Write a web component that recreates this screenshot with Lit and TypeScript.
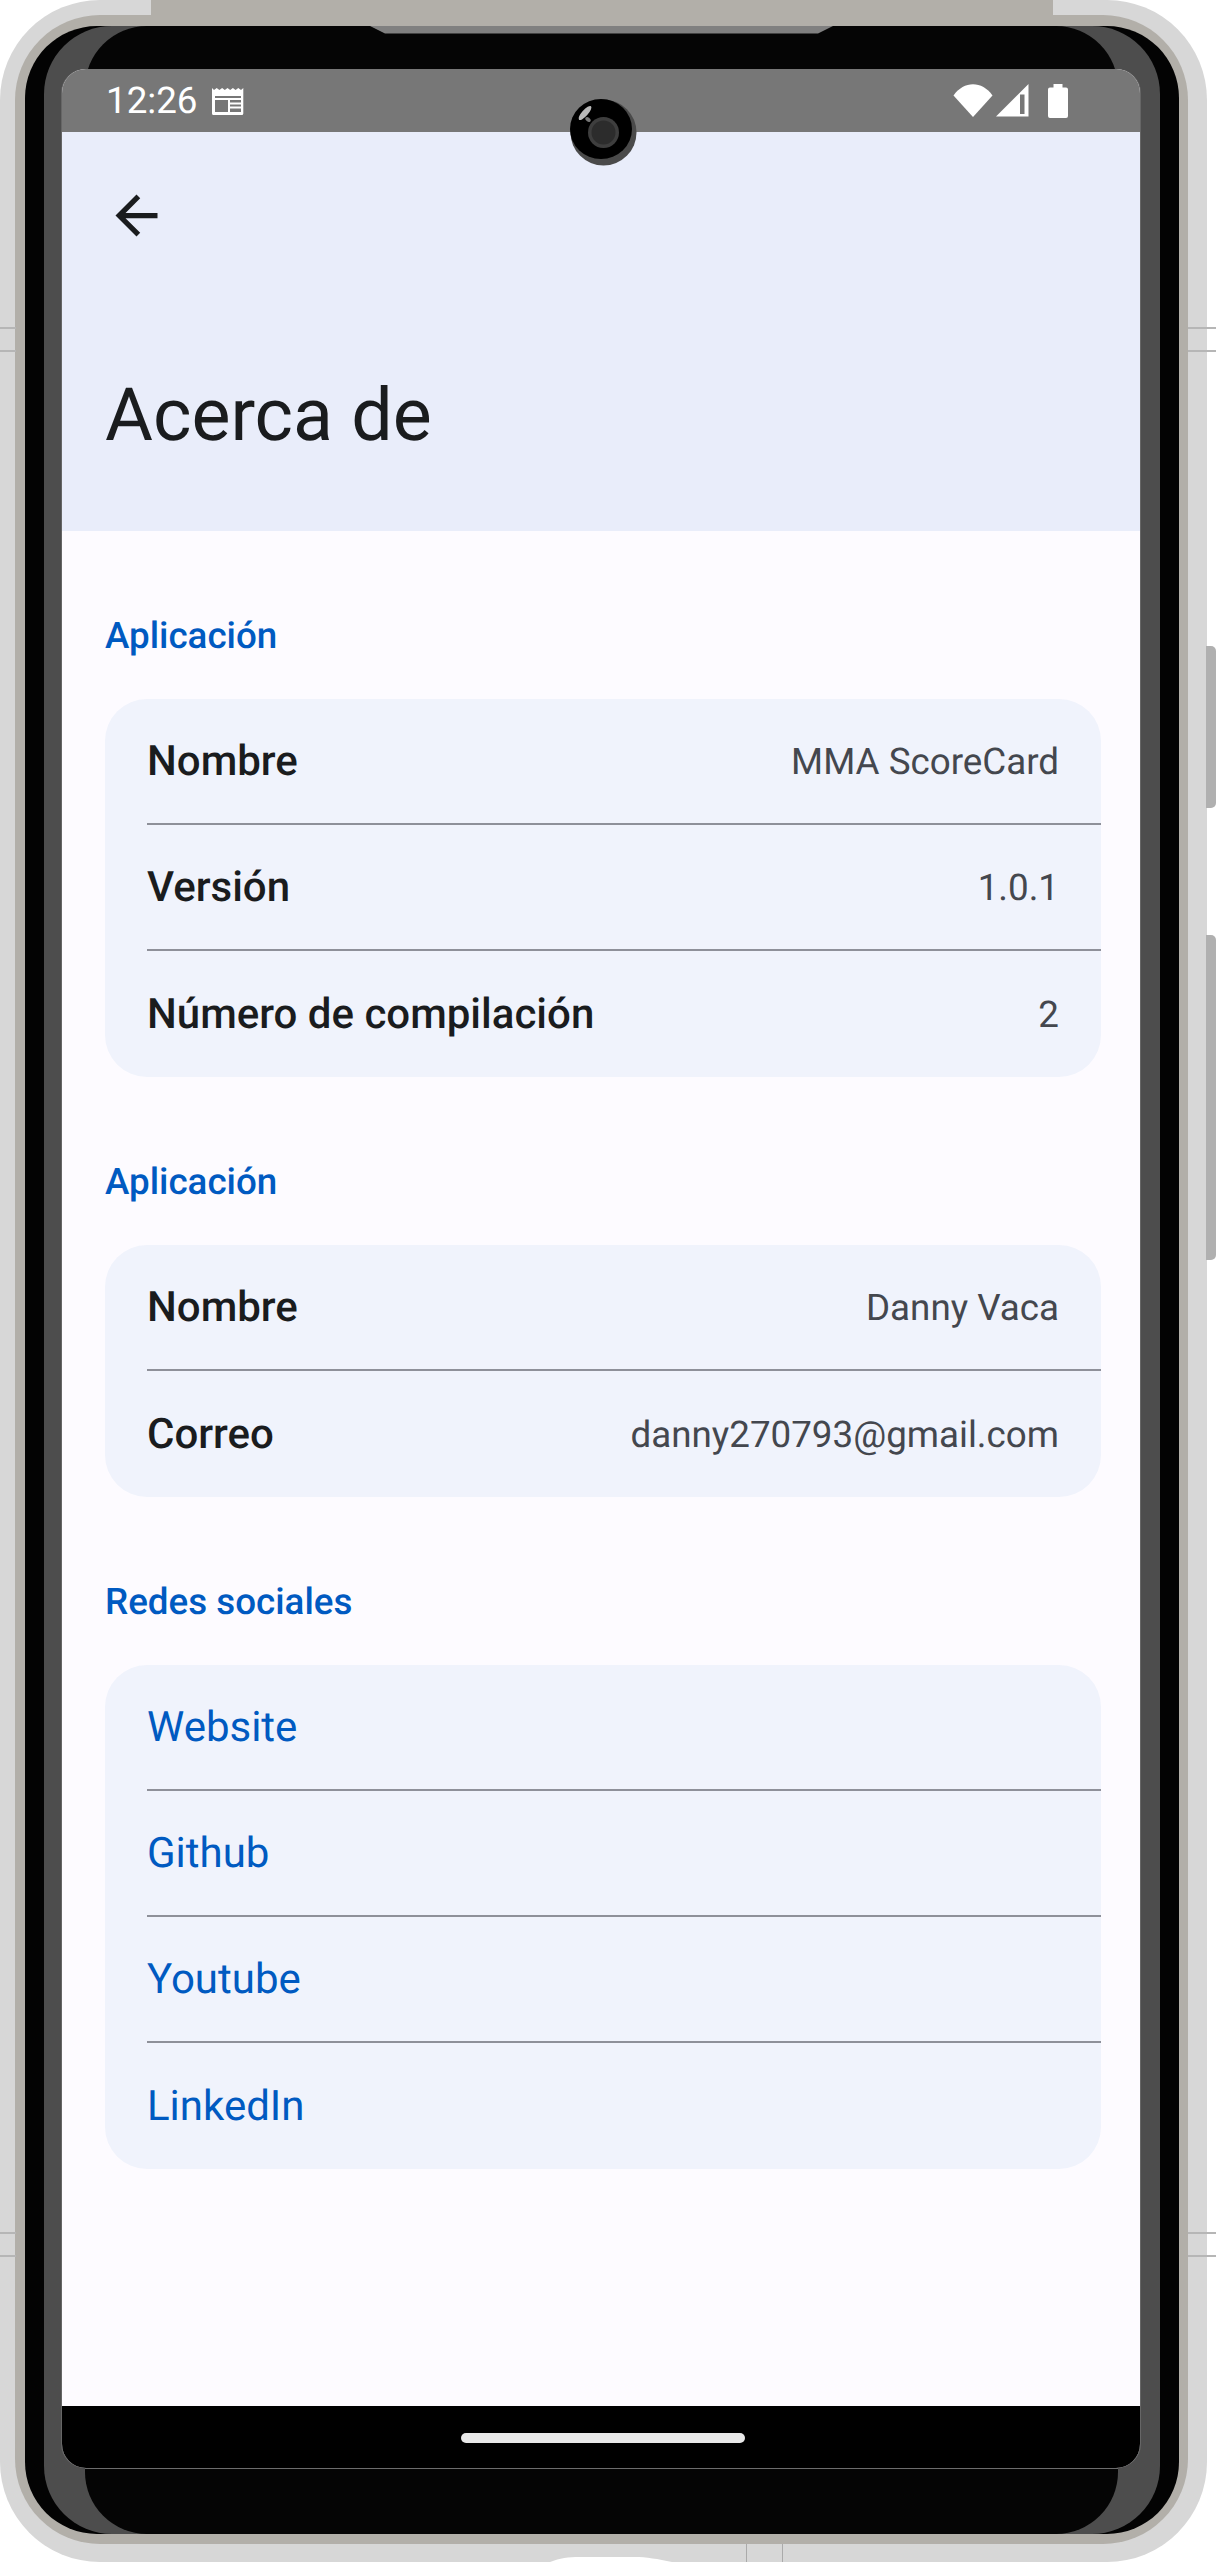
import { LitElement, html, css, svg } from "lit";
import { customElement } from "lit/decorators.js";

type Row = { label: string; value?: string };
type Section = { title: string; link?: boolean; rows: Row[] };

const sections: Section[] = [
  {
    title: "Aplicación",
    rows: [
      { label: "Nombre", value: "MMA ScoreCard" },
      { label: "Versión", value: "1.0.1" },
      { label: "Número de compilación", value: "2" },
    ],
  },
  {
    title: "Aplicación",
    rows: [
      { label: "Nombre", value: "Danny Vaca" },
      { label: "Correo", value: "danny270793@gmail.com" },
    ],
  },
  {
    title: "Redes sociales",
    link: true,
    rows: [{ label: "Website" }, { label: "Github" }, { label: "Youtube" }, { label: "LinkedIn" }],
  },
];

const calendarIcon = svg`
  <path fill="#fff" fill-rule="evenodd" d="M0 1l2 2 2.7-2 2.7 2 2.7-2 2.7 2 2.7-2 2.7 2 2.7-2 2.7 2 2.7-2 2.7 2 2.3-2V26.500a1.500 1.500 0 0 1-1.500 1.500H1.500A1.500 1.500 0 0 1 0 26.500zM3 9v16h13V13H3V9zM3 9v2h26V9zM18 13v2.400h11V13zM18 17.400v2.200h11v-2.200zM18 21.600V25h11v-3.400z"/>
`;

@customElement("app-root")
export class AppRoot extends LitElement {
  static styles = css`
    :host {
      display: block;
      position: relative;
      width: 1216px;
      height: 2562px;
      overflow: hidden;
      background: #fff;
      font-family: Roboto, "Noto Sans", sans-serif;
      text-rendering: geometricPrecision;
    }
    .shell {
      box-sizing: border-box;
      width: 1207px;
      height: 2562px;
      padding: 15px 19px 0 15px;
      background: #d7d7d7;
      border-radius: 100px;
    }
    .ring {
      box-sizing: border-box;
      height: 2529px;
      padding: 11px 9px 10px 10px;
      background: #b2afa9;
      border-radius: 85px;
    }
    .black {
      height: 100%;
      padding: 0 19px;
      background: #030303;
      border-radius: 72px;
    }
    .dark {
      height: 100%;
      padding: 0 42px 0 41px;
      background: #4d4d4d;
      border-radius: 68px;
    }
    .bezel {
      box-sizing: border-box;
      display: flex;
      flex-direction: column;
      height: 100%;
      padding-top: 43px;
      background: #050505;
      border-radius: 62px;
    }
    .screen {
      display: flex;
      flex-direction: column;
      height: 2399px;
      margin: 0 -22px 0 -23px;
      overflow: hidden;
      background: #fdfbff;
      border-radius: 24px;
      box-shadow: -1px 0 #666, 1px 0 #666;
    }
    .chin-line {
      height: 1px;
      background: #6b6b6b;
    }

    /* status bar */
    .status {
      flex: none;
      display: flex;
      align-items: center;
      height: 63px;
      padding: 0 72px 0 44px;
      color: #fff;
      background: #777;
    }
    .time {
      font-size: 36.75px;
      line-height: 36px;
    }
    .cal {
      margin-left: 14px;
    }
    .status-right {
      display: flex;
      align-items: flex-start;
      margin-left: auto;
    }
    .wifi { margin-right: 3px; }
    .signal { margin-right: 19px; }

    /* app bar */
    .appbar {
      flex: none;
      box-sizing: border-box;
      height: 399px;
      padding: 52px 43px 0;
      background: #e9edfa;
    }
    .back {
      display: block;
    }
    h1 {
      margin: 123px 0 0;
      font-size: 73.5px;
      font-weight: 400;
      line-height: 90px;
      color: #1a1c1e;
    }

    /* content */
    .content {
      flex: 1;
      padding: 0 39px 0 43px;
    }
    .section-title {
      height: 168px;
      box-sizing: border-box;
      padding-top: 79px;
      font-size: 36.75px;
      font-weight: 500;
      line-height: 52px;
      color: #005ac1;
    }
    .card {
      overflow: hidden;
      background: #f0f3fc;
      border-radius: 42px;
    }
    .row {
      box-sizing: border-box;
      display: flex;
      align-items: center;
      justify-content: space-between;
      height: 126px;
      margin-left: 42px;
      padding-right: 42px;
    }
    .row:not(:last-child) {
      border-bottom: 2px solid #8e9099;
    }
    .label {
      font-size: 42px;
      font-weight: 500;
      color: #1a1c1e;
    }
    .value {
      font-size: 36.75px;
      color: #44474e;
    }
    .link {
      font-size: 42px;
      color: #005ac1;
    }

    /* navigation bar */
    .nav {
      flex: none;
      display: flex;
      align-items: flex-start;
      justify-content: center;
      height: 62px;
      margin-top: auto;
      background: #000;
    }
    .pill {
      width: 284px;
      height: 10px;
      margin: 27px 0 0 3px;
      background: #e9e9e9;
      border-radius: 5px;
    }

    /* things that sit over the frame */
    .top-strip {
      position: absolute;
      left: 151px;
      top: 0;
      width: 902px;
      height: 26px;
      background: #b2afa9;
    }
    .notch {
      position: absolute;
      left: 370px;
      top: 26px;
    }
    .camera {
      position: absolute;
      left: 570px;
      top: 99px;
    }
    .side-btn {
      position: absolute;
      left: 1206px;
      width: 10px;
      background: #b0b0b0;
      border-radius: 0 5px 5px 0;
    }
    .btn-a { top: 646px; height: 162px; }
    .btn-b { top: 935px; height: 325px; }
    .hair {
      position: absolute;
      height: 2px;
      background: #b6b6b6;
    }
    .hair-v {
      position: absolute;
      top: 2544px;
      width: 1px;
      height: 18px;
      background: #aaa;
    }
    .foot {
      position: absolute;
      left: 550px;
      top: 2556px;
    }
  `;

  renderRow(row: Row, link?: boolean) {
    return html`<div class="row">
      ${link
        ? html`<span class="link">${row.label}</span>`
        : html`<span class="label">${row.label}</span><span class="value">${row.value}</span>`}
    </div>`;
  }

  render() {
    return html`
      <div class="shell">
        <div class="ring">
          <div class="black">
            <div class="dark">
              <div class="bezel">
                <div class="screen">
                  <div class="status">
                    <span class="time">12:26</span>
                    <svg class="cal" width="32" height="28" viewBox="0 0 32 28">${calendarIcon}</svg>
                    <div class="status-right">
                      <svg class="wifi" width="40" height="33" viewBox="0 0 40 33">
                        <path fill="#fff" d="M20 33L0.500 11.500C11 -3.500 29 -3.500 39.500 11.500z" />
                      </svg>
                      <svg class="signal" width="33" height="33" viewBox="0 0 33 33">
                        <path fill="#fff" fill-rule="evenodd" d="M32.500 0V32.500H0zM24 10.500V30h4.500V10.500z" />
                      </svg>
                      <svg width="20" height="34" viewBox="0 0 20 34">
                        <path fill="#fff" d="M5.500 0h9v3.500H18a2 2 0 0 1 2 2V32a2 2 0 0 1-2 2H2a2 2 0 0 1-2-2V5.500a2 2 0 0 1 2-2h3.500z" />
                      </svg>
                    </div>
                  </div>
                  <div class="appbar">
                    <svg class="back" width="63" height="63" viewBox="0 0 24 24">
                      <path fill="#1a1c1e" d="M20 11H7.830l5.590-5.590L12 4l-8 8 8 8 1.410-1.410L7.830 13H20v-2z" />
                    </svg>
                    <h1>Acerca de</h1>
                  </div>
                  <div class="content">
                    ${sections.map(
                      (s) => html`
                        <div class="section-title">${s.title}</div>
                        <div class="card">${s.rows.map((r) => this.renderRow(r, s.link))}</div>
                      `
                    )}
                  </div>
                  <div class="nav"><div class="pill"></div></div>
                </div>
                <div class="chin-line"></div>
              </div>
            </div>
          </div>
        </div>
      </div>

      <div class="top-strip"></div>
      <svg class="notch" width="464" height="8" viewBox="0 0 464 8">
        <polygon fill="#808080" points="0,0 15,7.500 448,7.500 463,0" />
      </svg>
      <svg class="camera" width="68" height="68" viewBox="0 0 68 68">
        <circle cx="33.500" cy="33.500" r="33" fill="#4a4a4a" />
        <ellipse cx="31" cy="30" rx="31" ry="30" fill="#000" />
        <circle cx="33.500" cy="33.500" r="15.500" fill="#3e3e3e" />
        <circle cx="33.500" cy="33.500" r="12" fill="#2c2c2c" />
        <ellipse cx="15" cy="14" rx="3" ry="9" fill="#b9b9b9" transform="rotate(42 15 14)" />
        <ellipse cx="18" cy="20.500" rx="2" ry="3" fill="#777" transform="rotate(-50 18 20.500)" />
      </svg>
      <div class="side-btn btn-a"></div>
      <div class="side-btn btn-b"></div>
      <div class="hair" style="left:0;top:327px;width:16px"></div>
      <div class="hair" style="left:0;top:350px;width:16px"></div>
      <div class="hair" style="left:1188px;top:327px;width:28px"></div>
      <div class="hair" style="left:1188px;top:350px;width:28px"></div>
      <div class="hair" style="left:0;top:2232px;width:16px"></div>
      <div class="hair" style="left:0;top:2255px;width:16px"></div>
      <div class="hair" style="left:1188px;top:2232px;width:28px"></div>
      <div class="hair" style="left:1188px;top:2255px;width:28px"></div>
      <div class="hair-v" style="left:746px"></div>
      <div class="hair-v" style="left:782px"></div>
      <svg class="foot" width="125" height="6" viewBox="0 0 125 6">
        <path fill="#fff" d="M0 6C10 2 18 1 30 1H85C96 1 108 3 122 6z" />
      </svg>
    `;
  }
}
